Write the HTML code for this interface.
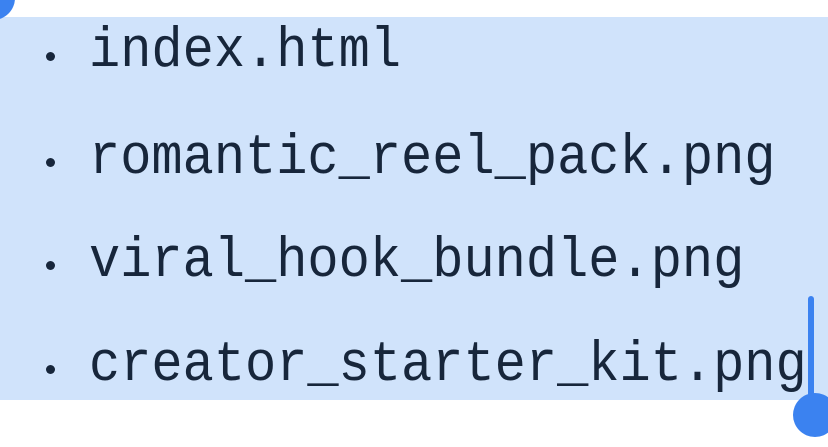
<!DOCTYPE html>
<html><head><style>
html,body{margin:0;padding:0;width:828px;height:447px;overflow:hidden;background:#fff;}
.sel{position:absolute;left:0;top:17px;width:828px;height:383px;background:#d0e3fb;}
.t{position:absolute;left:89px;font-family:"Liberation Mono",monospace;font-size:52px;color:#17263b;line-height:1;white-space:nowrap;transform:scaleY(1.08);transform-origin:0 80%;}
.b{position:absolute;left:46px;width:9px;height:9px;border-radius:50%;background:#17263b;}
.c{position:absolute;background:#3b82f0;border-radius:50%;}
</style></head><body>
<div class="sel"></div>
<div class="b" style="top:52px"></div><div class="t" style="top:27px">index.html</div>
<div class="b" style="top:158px"></div><div class="t" style="top:134px">romantic_reel_pack.png</div>
<div class="b" style="top:261px"></div><div class="t" style="top:237px">viral_hook_bundle.png</div>
<div class="b" style="top:365px"></div><div class="t" style="top:341px">creator_starter_kit.png</div>
<div style="position:absolute;left:808px;top:296px;width:6px;height:110px;background:#3b82f0;border-radius:3px"></div>
<div class="c" style="left:793px;top:393px;width:44px;height:44px"></div>
<div class="c" style="left:-29px;top:-24px;width:44px;height:44px"></div>
</body></html>
